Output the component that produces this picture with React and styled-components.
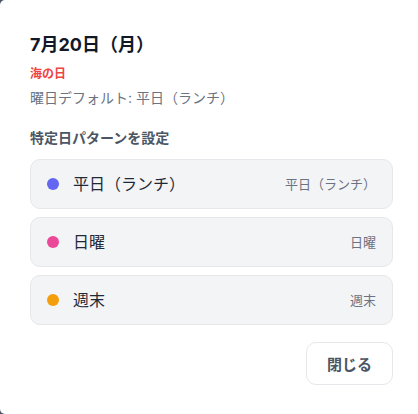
import styled, { createGlobalStyle } from 'styled-components';

const GlobalCss = createGlobalStyle`
  * {
    margin: 0;
    padding: 0;
    box-sizing: border-box;
  }

  body {
    background-color: #4b5563;
    font-family: Inter, "Noto Sans CJK JP", sans-serif;
    -webkit-font-smoothing: antialiased;
  }
`;

const dotColors = {
  indigo: '#6366f1',
  pink: '#ec4899',
  amber: '#f59e0b',
};

const Modal = styled.div`
  width: 418px;
  height: 414px;
  background-color: #ffffff;
  border-radius: 5px 0 0 5px;
  padding: 31px 25px 0 30px;
  display: flex;
  flex-direction: column;
`;

const Title = styled.h2`
  font-size: 18px;
  line-height: 28px;
  font-weight: 700;
  color: #111827;
`;

const Holiday = styled.p`
  margin-top: 7px;
  font-size: 12px;
  line-height: 16px;
  font-weight: 700;
  color: #ef4444;
`;

const DefaultText = styled.p`
  margin-top: 6px;
  font-size: 14px;
  line-height: 20px;
  color: #6b7280;
`;

const SectionLabel = styled.h3`
  margin-top: 20px;
  font-size: 14px;
  line-height: 20px;
  font-weight: 600;
  color: #4b5563;
`;

const OptionList = styled.ul`
  margin-top: 11px;
  list-style: none;
  display: flex;
  flex-direction: column;
  gap: 8px;
`;

const Option = styled.li`
  height: 50px;
  display: flex;
  align-items: center;
  gap: 14px;
  padding: 0 16px;
  background-color: #f3f4f6;
  border: 1px solid #e5e7eb;
  border-radius: 10px;
  cursor: pointer;
`;

const Dot = styled.span`
  width: 12px;
  height: 12px;
  border-radius: 50%;
  flex-shrink: 0;
  background-color: ${({ color }) => dotColors[color]};
`;

const OptionName = styled.span`
  flex: 1;
  font-size: 16px;
  line-height: 24px;
  color: #1f2937;
`;

const OptionHint = styled.span`
  font-size: 13px;
  line-height: 18px;
  color: #6b7280;
`;

const Footer = styled.div`
  margin-top: 17px;
  display: flex;
  justify-content: flex-end;
`;

const CloseButton = styled.button`
  height: 43px;
  padding: 0 20px;
  background-color: #ffffff;
  border: 1px solid #e5e7eb;
  border-radius: 10px;
  font-family: inherit;
  font-size: 15px;
  font-weight: 700;
  color: #4b5563;
  cursor: pointer;
`;

const patterns = [
  { name: '平日（ランチ）', color: 'indigo' },
  { name: '日曜', color: 'pink' },
  { name: '週末', color: 'amber' },
];

export default function App() {
  return (
    <>
      <GlobalCss />
      <Modal>
        <Title>7月20日（月）</Title>
        <Holiday>海の日</Holiday>
        <DefaultText>曜日デフォルト: 平日（ランチ）</DefaultText>
        <SectionLabel>特定日パターンを設定</SectionLabel>
        <OptionList>
          {patterns.map((p) => (
            <Option key={p.name}>
              <Dot color={p.color} />
              <OptionName>{p.name}</OptionName>
              <OptionHint>{p.name}</OptionHint>
            </Option>
          ))}
        </OptionList>
        <Footer>
          <CloseButton type="button">閉じる</CloseButton>
        </Footer>
      </Modal>
    </>
  );
}
